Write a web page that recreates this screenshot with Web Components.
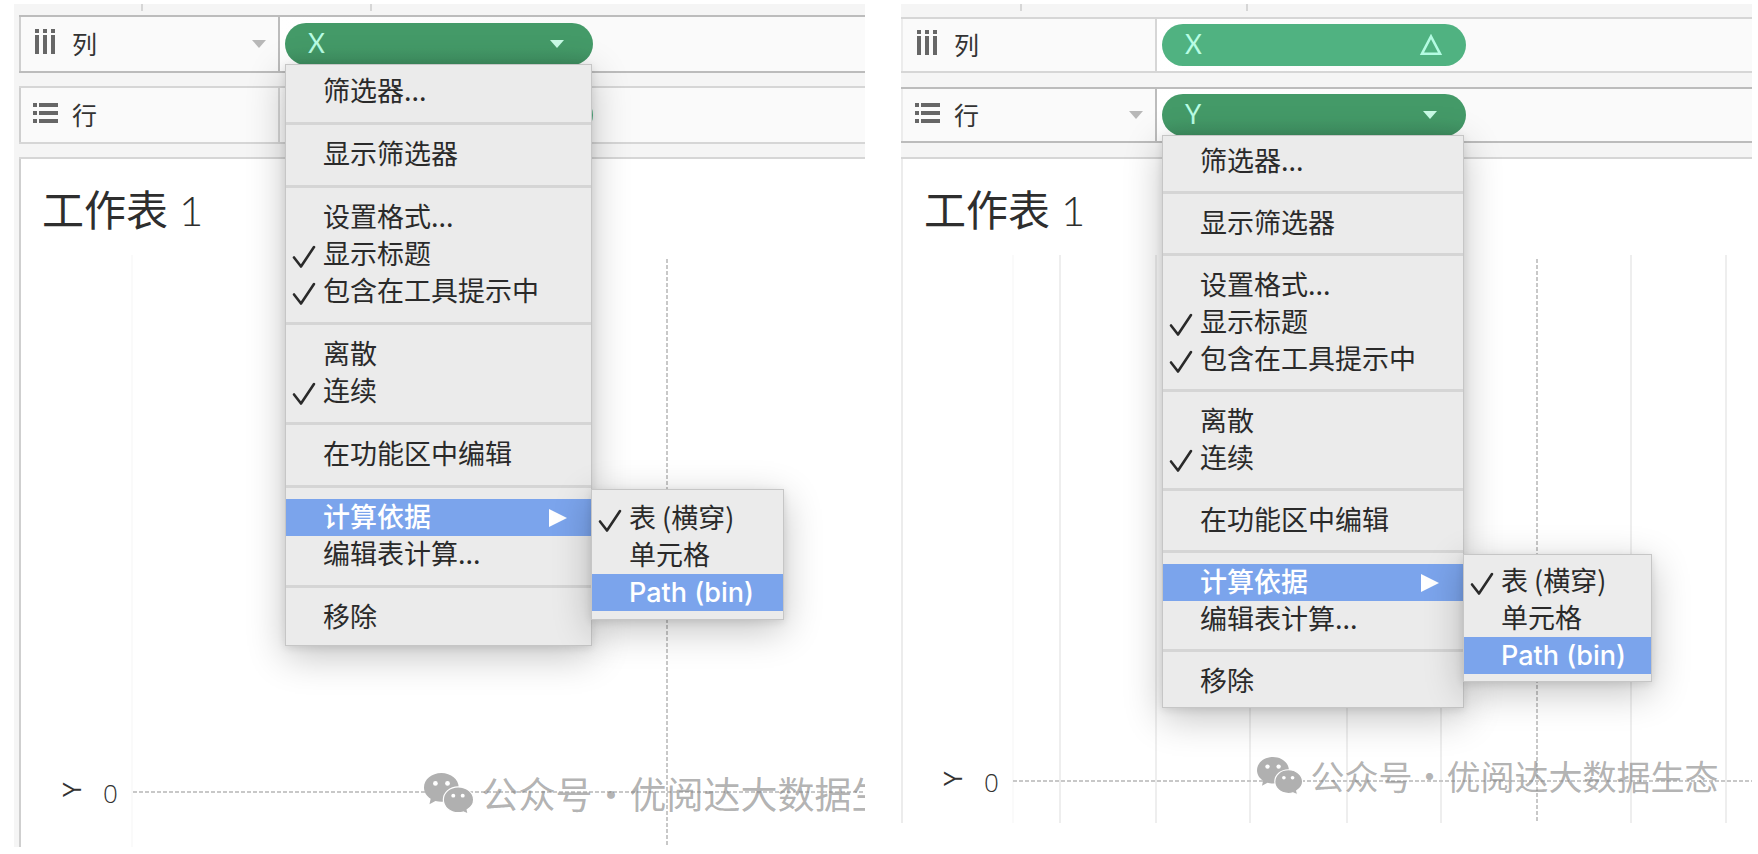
<!DOCTYPE html>
<html lang="zh-CN">
<head>
<meta charset="utf-8">
<title>工作表 1</title>
<style>
  body {
    margin: 0;
    background: #fff;
    color: #333;
    font-family: "Open Sans", "Noto Sans CJK SC", sans-serif;
  }
  main {
    display: flex;
    align-items: flex-start;
    gap: 36px;
    padding: 4px 6px 0 14px;
  }
  sheet-panel { flex: 1 1 0; min-width: 0; }
  .first { --gutter: 5px; --strip: 11px; --shelf: 58px; --gap: 13px; --head: 261px; --pill: 308px;
           --menu: 307px; --menu-pad: 8px 0 9px; --divider: 12px 0 11px; --sub: 193px; --sub-pad: 10px 0 8px;
           --edge: #cfcfcf; --mark: 37px; --tick-a: 128px; --tick-b: 357px; }
  .second { --gutter: 0px; --strip: 13px; --shelf: 56px; --gap: 14px; --head: 256px; --pill: 304px;
            --menu: 302px; --menu-pad: 7px 0; --divider: 11px 0; --sub: 189px; --sub-pad: 8px 0 7px;
            --edge: #ececec; --mark: 34px; --tick-a: 120px; --tick-b: 346px; }
</style>
</head>
<body>
<main>
  <sheet-panel class="first" heading="工作表 1">
    <shelf-row slot="shelf" label="列" icon="columns" active>
      <field-pill label="X" mark="caret" open>
        <context-menu>
          <menu-item>筛选器...</menu-item>
          <menu-divider></menu-divider>
          <menu-item>显示筛选器</menu-item>
          <menu-divider></menu-divider>
          <menu-item>设置格式...</menu-item>
          <menu-item checked>显示标题</menu-item>
          <menu-item checked>包含在工具提示中</menu-item>
          <menu-divider></menu-divider>
          <menu-item>离散</menu-item>
          <menu-item checked>连续</menu-item>
          <menu-divider></menu-divider>
          <menu-item>在功能区中编辑</menu-item>
          <menu-divider></menu-divider>
          <menu-item selected parent>计算依据
            <context-menu slot="submenu" nested>
              <menu-item checked>表 (横穿)</menu-item>
              <menu-item>单元格</menu-item>
              <menu-item selected>Path (bin)</menu-item>
            </context-menu>
          </menu-item>
          <menu-item>编辑表计算...</menu-item>
          <menu-divider></menu-divider>
          <menu-item>移除</menu-item>
        </context-menu>
      </field-pill>
    </shelf-row>
    <shelf-row slot="shelf" label="行" icon="rows">
      <field-pill label="" name="Y"></field-pill>
    </shelf-row>
    <axis-chart height="592" axis="114" faint="113" zero-x="648" zero-y="537" label-x="84" title-x="62"></axis-chart>
    <water-mark slot="mark" style="--x: 410px; --y: 767px" text="优阅达大数据生态"></water-mark>
  </sheet-panel>

  <sheet-panel class="second" heading="工作表 1">
    <shelf-row slot="shelf" label="列" icon="columns">
      <field-pill label="X" mark="delta"></field-pill>
    </shelf-row>
    <shelf-row slot="shelf" label="行" icon="rows" active>
      <field-pill label="Y" mark="caret" open>
        <context-menu>
          <menu-item>筛选器...</menu-item>
          <menu-divider></menu-divider>
          <menu-item>显示筛选器</menu-item>
          <menu-divider></menu-divider>
          <menu-item>设置格式...</menu-item>
          <menu-item checked>显示标题</menu-item>
          <menu-item checked>包含在工具提示中</menu-item>
          <menu-divider></menu-divider>
          <menu-item>离散</menu-item>
          <menu-item checked>连续</menu-item>
          <menu-divider></menu-divider>
          <menu-item>在功能区中编辑</menu-item>
          <menu-divider></menu-divider>
          <menu-item selected parent>计算依据
            <context-menu slot="submenu" nested>
              <menu-item checked>表 (横穿)</menu-item>
              <menu-item>单元格</menu-item>
              <menu-item selected>Path (bin)</menu-item>
            </context-menu>
          </menu-item>
          <menu-item>编辑表计算...</menu-item>
          <menu-divider></menu-divider>
          <menu-item>移除</menu-item>
        </context-menu>
      </field-pill>
    </shelf-row>
    <axis-chart height="568" axis="112" faint="112" grid="159,255,349,446,540,730,825" zero-x="636" zero-y="526" label-x="83" title-x="61"></axis-chart>
    <water-mark slot="mark" style="--x: 356px; --y: 750px" text="优阅达大数据生态"></water-mark>
  </sheet-panel>
</main>

<script>
const define = (name, render) => customElements.define(name, class extends HTMLElement {
  connectedCallback() {
    if (this.shadowRoot) return;
    this.attachShadow({ mode: "open" }).innerHTML = render(this);
  }
});

/* One worksheet window: ruler strip, shelves, then the sheet itself. */
define("sheet-panel", el => `
  <style>
    :host { display: block; position: relative; overflow: hidden; background: #f5f5f5; }
    .strip { height: var(--strip); display: flex; }
    .strip i { box-sizing: border-box; height: 7px; border-right: 2px solid #d6d6d6; }
    .strip i:first-child { width: calc(var(--tick-a) + 1px); }
    .strip i:last-child { width: calc(var(--tick-b) - var(--tick-a)); }
    .shelves { display: flex; flex-direction: column; gap: var(--gap); padding: 0 0 var(--gap) var(--gutter); }
    .sheet { margin-left: var(--gutter); background: #fff; border-top: 2px solid #d6d6d6; position: relative; }
    .sheet::before { content: ""; position: absolute; inset: 0 auto 0 0; width: 2px; background: var(--edge); }
    h1 { margin: 0; padding: 20px 0 0 23px; height: 76px; font-size: 42px; line-height: 62px; font-weight: 400; color: #2e2e2e; }
    h1 span { font-family: Lato, sans-serif; font-weight: 300; }
  </style>
  <div class="strip"><i></i><i></i></div>
  <div class="shelves"><slot name="shelf"></slot></div>
  <section class="sheet">
    <h1>${el.getAttribute("heading").replace(/\d+$/, "<span>$&</span>")}</h1>
    <slot></slot>
  </section>
  <slot name="mark"></slot>`);

const ICONS = {
  columns: `<svg width="26" height="26" viewBox="0 0 26 26" fill="#666"><path d="M2 0h4v4H2zM10 0h4v4h-4zM18 0h4v4h-4zM2 6h4v19H2zM10 6h4v19h-4zM18 6h4v19h-4z"/></svg>`,
  rows: `<svg width="26" height="26" viewBox="0 0 26 26" fill="#666"><path d="M0 3h4v4H0zM0 11h4v4H0zM0 19h4v4H0zM6 3h19v4H6zM6 11h19v4H6zM6 19h19v4H6z"/></svg>`
};

define("shelf-row", el => `
  <style>
    :host { display: flex; box-sizing: border-box; height: var(--shelf); background: #fafafa;
            --line: #d6d6d6; border: 2px solid var(--line); border-width: 2px 0; }
    :host([active]) { --line: #bcbcbc; }
    .head { box-sizing: border-box; width: var(--head); flex: none; display: flex; align-items: center;
            padding: 0 12px; border-left: 2px solid var(--edge); border-right: 2px solid var(--line); font-size: 25px; line-height: 36px; }
    svg { display: block; margin: 0 13px 4px 0; }
    button { margin-left: auto; padding: 0; border: 0; background: none; display: block; }
    button svg { margin: 0; }
    .fields { flex: 1; min-width: 0; display: flex; align-items: center; padding-left: 5px;
              background: linear-gradient(90deg, #fff, #fafafa 50%); }
  </style>
  <div class="head">
    ${ICONS[el.getAttribute("icon")]}<span>${el.getAttribute("label")}</span>
    ${el.hasAttribute("active") ? `<button aria-label="${el.getAttribute("label")}"><svg width="14" height="8" viewBox="0 0 14 8"><path d="M0 0h14L7 8z" fill="#b8b8b8"/></svg></button>` : ""}
  </div>
  <div class="fields"><slot></slot></div>`);

const MARKS = {
  caret: `<svg width="26" height="22" viewBox="0 0 26 22"><path d="M6 7h14l-7 8z" fill="#c9fbe6"/></svg>`,
  delta: `<svg width="26" height="22" viewBox="0 0 26 22"><path d="M14 2.500L23 19.700H5z" fill="none" stroke="#b4fbe2" stroke-width="2.600"/></svg>`
};

define("field-pill", el => `
  <style>
    :host { display: block; position: relative; width: var(--pill); flex: none; }
    button { box-sizing: border-box; width: 100%; height: 42px; display: flex; align-items: center; justify-content: space-between;
             margin: 0; padding: 0 23px; border: 0; border-radius: 21px; background: #50b281; color: #b8fde4;
             font-family: Lato, sans-serif; font-size: 26px; line-height: 36px; font-weight: 400; text-align: left; }
    :host([open]) button { background: linear-gradient(#449a68 60%, #3f8f61); }
    span { padding-bottom: 2px; }
    svg { display: block; }
  </style>
  <button aria-label="${el.getAttribute("name") || el.getAttribute("label")}"><span>${el.getAttribute("label")}</span>${MARKS[el.getAttribute("mark")] || ""}</button>
  <slot></slot>`);

define("context-menu", () => `
  <style>
    :host { position: absolute; z-index: 10; top: calc(100% - 1px); left: 0; box-sizing: border-box; width: var(--menu);
            padding: var(--menu-pad); background: #ebebeb; border: 1px solid #c6c6c6;
            box-shadow: 0 10px 36px rgba(0, 0, 0, .24), 0 2px 8px rgba(0, 0, 0, .1); }
    :host([nested]) { top: -10px; left: 100%; width: var(--sub); padding: var(--sub-pad); }
  </style>
  <div role="menu"><slot></slot></div>`);

define("menu-divider", () => `
  <style>
    :host { display: block; padding: var(--divider); }
    div { height: 3px; background: #d5d5d5; }
  </style>
  <div role="separator"></div>`);

define("menu-item", el => `
  <style>
    :host { display: block; position: relative; }
    button { box-sizing: border-box; width: 100%; height: 37px; display: flex; align-items: center; margin: 0;
             padding: 0 24px 4px 0; border: 0; background: none; color: #2a2a2a; text-align: left; white-space: nowrap;
             font-family: "Noto Sans CJK SC", sans-serif; font-size: 27px; line-height: 36px; font-weight: 400; }
    :host([selected]) button { padding-bottom: 0; background: #7ba4ec; color: #fff;
             font-family: Inter, "Noto Sans CJK SC", sans-serif; font-weight: 500; }
    .tick { box-sizing: border-box; width: 37px; flex: none; padding: 8px 0 0 6px; }
    .arrow { margin-left: auto; }
    svg { display: block; }
  </style>
  <button role="${el.hasAttribute("checked") ? "menuitemcheckbox" : "menuitem"}">
    <span class="tick">${el.hasAttribute("checked") ? `<svg width="24" height="24" viewBox="0 0 24 24"><path d="M2 12.500L9 21.500L22 2" fill="none" stroke="#2a2a2a" stroke-width="2.600" stroke-linecap="round" stroke-linejoin="round"/></svg>` : ""}</span>
    <span><slot></slot></span>
    ${el.hasAttribute("parent") ? `<svg class="arrow" width="18" height="18" viewBox="0 0 18 18"><path d="M0 0L18 9L0 18z" fill="#fff"/></svg>` : ""}
  </button>
  <slot name="submenu"></slot>`);

/* Empty plot: grid lines, dashed zero lines and the Y axis label. */
define("axis-chart", el => {
  const n = a => Number(el.getAttribute(a));
  const y = n("zero-y"), x = n("zero-x");
  const grid = (el.getAttribute("grid") || "").split(",").filter(Boolean);
  return `
  <style>
    :host { display: block; }
    svg { display: block; width: 100%; font-size: 26px; }
    .grid { stroke: #eee; stroke-width: 2; }
    .faint { stroke: #fafafa; stroke-width: 2; }
    .zero { stroke: #c8c8c8; stroke-width: 2; stroke-dasharray: 4 2; }
  </style>
  <svg height="${n("height")}" role="img" aria-label="Y">
    <line class="faint" x1="${n("faint")}" x2="${n("faint")}" y1="0" y2="100%"/>
    ${grid.map(g => `<line class="grid" x1="${g}" x2="${g}" y1="0" y2="100%"/>`).join("")}
    <line class="zero" x1="${x}" x2="${x}" y1="4" y2="100%"/>
    <line class="zero" x1="${n("axis")}" x2="100%" y1="${y}" y2="${y}"/>
    <text x="${n("label-x")}" y="${y + 11}" font-weight="300" fill="#333">0</text>
    <text transform="translate(${n("title-x")} ${y + 5}) rotate(-90)" fill="#333">Y</text>
  </svg>`;
});

define("water-mark", el => `
  <style>
    :host { position: absolute; left: var(--x); top: var(--y); display: flex; align-items: center; white-space: nowrap;
            font-size: var(--mark); line-height: 44px; font-weight: 400; color: rgba(130, 130, 130, .62);
            font-family: "Noto Sans CJK SC", sans-serif; }
    svg { display: block; flex: none; width: auto; height: calc(var(--mark) * 1.1); margin-right: 8px; }
    .dot { width: 1em; text-align: center; }
  </style>
  <svg viewBox="0 0 50 41">
    <path d="M17.500 0C7.800 0 0 6.500 0 14.500c0 4.700 2.600 8.700 6.700 11.400L5.500 31.500l6-3.300c2 .6 4 .8 6 .8C27.200 29 35 22.500 35 14.500S27.200 0 17.500 0z" fill="#b0b0b0"/>
    <path d="M34.500 14C26 14 19.500 19.800 19.500 27s6.500 13 15 13c1.800 0 3.500-.2 5-.7l5 2-1-4.300c3.800-2.200 6.500-5.800 6.500-10 0-7.200-7-13-15.500-13z" fill="#b0b0b0" stroke="#fff" stroke-width="1.200"/>
    <g fill="#fff"><circle cx="11.500" cy="10.500" r="2.400"/><circle cx="23.700" cy="10.500" r="2.400"/><circle cx="29.500" cy="22.800" r="2"/><circle cx="39" cy="22.800" r="2"/></g>
  </svg>
  <span>公众号</span><span class="dot">·</span><span>${el.getAttribute("text")}</span>`);
</script>
</body>
</html>
